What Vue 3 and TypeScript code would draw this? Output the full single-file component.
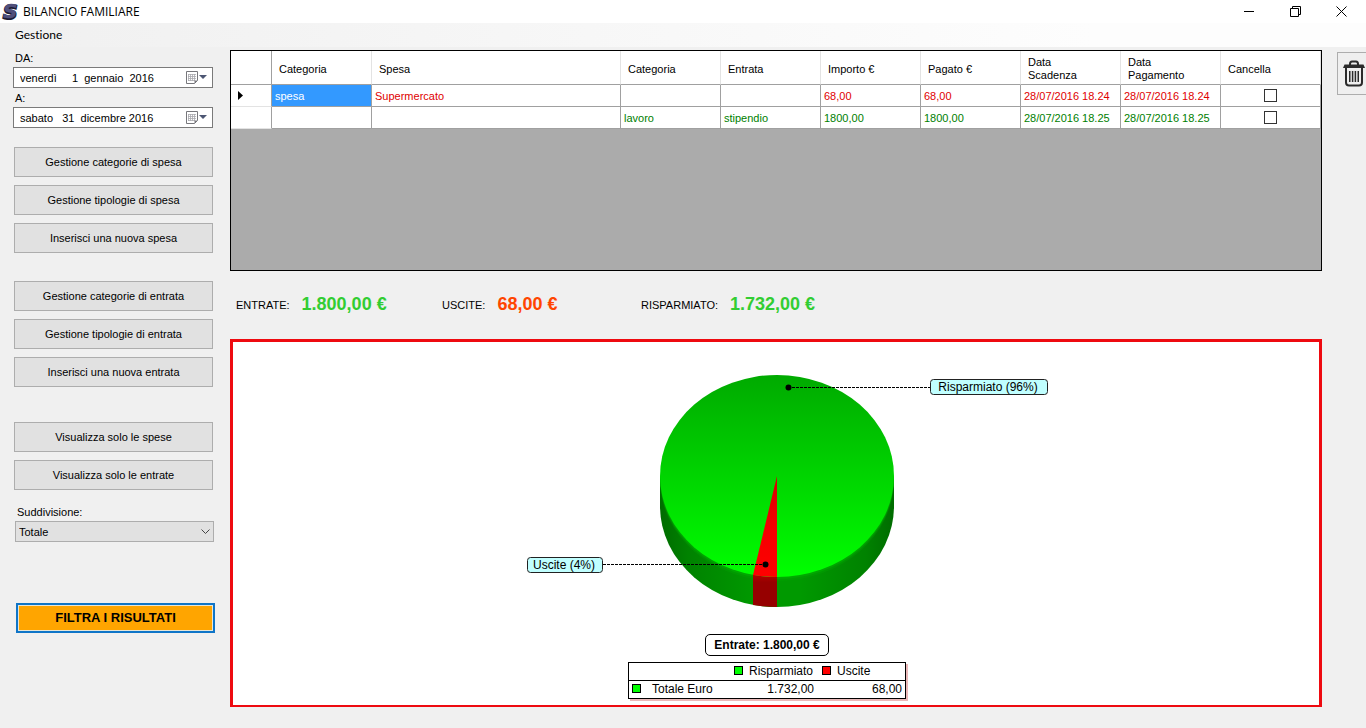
<script setup lang="ts">
import { reactive, ref } from 'vue'

interface Movement {
  expenseCategory: string
  expense: string
  incomeCategory: string
  income: string
  amount: string
  paid: string
  due: string
  paidOn: string
  kind: 'out' | 'in'
  remove: boolean
}

const movements = reactive<Movement[]>([
  {
    expenseCategory: 'spesa', expense: 'Supermercato', incomeCategory: '', income: '',
    amount: '68,00', paid: '68,00', due: '28/07/2016 18.24', paidOn: '28/07/2016 18.24',
    kind: 'out', remove: false,
  },
  {
    expenseCategory: '', expense: '', incomeCategory: 'lavoro', income: 'stipendio',
    amount: '1800,00', paid: '1800,00', due: '28/07/2016 18.25', paidOn: '28/07/2016 18.25',
    kind: 'in', remove: false,
  },
])

const headers = ['Categoria', 'Spesa', 'Categoria', 'Entrata', 'Importo €', 'Pagato €', 'Data Scadenza', 'Data Pagamento', 'Cancella']

const buttonGroups = [
  ['Gestione categorie di spesa', 'Gestione tipologie di spesa', 'Inserisci una nuova spesa'],
  ['Gestione categorie di entrata', 'Gestione tipologie di entrata', 'Inserisci una nuova entrata'],
  ['Visualizza solo le spese', 'Visualizza solo le entrate'],
]

const dates = reactive([
  { id: 'date-from', label: 'DA:', value: 'venerdì\u00a0\u00a0\u00a0\u00a0 1\u00a0 gennaio\u00a0 2016' },
  { id: 'date-to', label: 'A:', value: 'sabato\u00a0\u00a0\u00a031\u00a0 dicembre 2016' },
])

const grouping = ref('Totale')
</script>

<template>
  <div class="window">
    <header class="titlebar">
      <svg class="logo" width="18" height="20" viewBox="0 0 18 20" aria-hidden="true">
        <text x="1" y="17" class="logo-back">S</text>
        <text x="1" y="16" class="logo-front">S</text>
      </svg>
      <h1>BILANCIO FAMILIARE</h1>
      <div class="window-buttons">
        <button type="button" aria-label="Riduci a icona">
          <svg width="11" height="11" viewBox="0 0 11 11"><path d="M0 5.5H10" /></svg>
        </button>
        <button type="button" aria-label="Ripristina">
          <svg width="11" height="11" viewBox="0 0 11 11"><path d="M0.5 2.5H8.5V10.5H0.5ZM2.5 2.5V0.5H10.5V8.5H8.5" /></svg>
        </button>
        <button type="button" aria-label="Chiudi">
          <svg width="11" height="11" viewBox="0 0 11 11"><path d="M0.5 0.5L10.5 10.5M10.5 0.5L0.5 10.5" /></svg>
        </button>
      </div>
    </header>

    <nav class="menubar">
      <button type="button">Gestione</button>
    </nav>

    <div class="body">
      <aside class="sidebar">
        <div v-for="d in dates" :key="d.id" class="date-field">
          <label :for="d.id">{{ d.label }}</label>
          <div class="picker">
            <input :id="d.id" v-model="d.value" type="text" />
            <button type="button" :aria-label="'Calendario ' + d.label">
              <svg width="22" height="13" viewBox="0 0 22 13">
                <path d="M0.5 0.5H11.5V9.5L8.5 12.5H0.5Z" fill="#fff" stroke="#77777c" />
                <path d="M2.5 3V10M4.5 3V10M6.5 3V10M8.5 3V10M2 3.5H10M2 5.5H10M2 7.5H10M2 9.5H9" stroke="#a9aaae" stroke-width="0.8" />
                <path d="M8.5 12.5V9.5H11.5Z" fill="#77777c" />
                <path d="M13 4H21L17 8Z" fill="#4d5673" />
              </svg>
            </button>
          </div>
        </div>

        <div v-for="(group, g) in buttonGroups" :key="g" class="button-group">
          <button v-for="label in group" :key="label" type="button" class="btn">{{ label }}</button>
        </div>

        <div class="grouping">
          <label for="grouping">Suddivisione:</label>
          <div class="select-box">
            <select id="grouping" v-model="grouping">
              <option>Totale</option>
              <option>Mensile</option>
            </select>
            <svg width="9" height="6" viewBox="0 0 9 6" aria-hidden="true"><path d="M0.5 0.5L4.5 4.5L8.5 0.5" /></svg>
          </div>
        </div>

        <button type="button" class="filter">FILTRA I RISULTATI</button>
      </aside>

      <main class="content">
        <div class="grid">
          <table>
            <colgroup>
              <col class="col-marker" />
              <col class="col-std" />
              <col />
              <col v-for="n in 6" :key="n" class="col-std" />
              <col class="col-std" />
            </colgroup>
            <thead>
              <tr>
                <th></th>
                <th v-for="(h, i) in headers" :key="i" scope="col">{{ h }}</th>
              </tr>
            </thead>
            <tbody>
              <tr v-for="(m, i) in movements" :key="i" :class="m.kind">
                <td class="marker">
                  <svg v-if="i === 0" width="5" height="9" viewBox="0 0 5 9"><path d="M0 0L5 4.5L0 9Z" /></svg>
                </td>
                <td :class="{ selected: i === 0 }">{{ m.expenseCategory }}</td>
                <td>{{ m.expense }}</td>
                <td>{{ m.incomeCategory }}</td>
                <td>{{ m.income }}</td>
                <td>{{ m.amount }}</td>
                <td>{{ m.paid }}</td>
                <td>{{ m.due }}</td>
                <td>{{ m.paidOn }}</td>
                <td class="check"><input v-model="m.remove" type="checkbox" :aria-label="'Cancella riga ' + (i + 1)" /></td>
              </tr>
            </tbody>
          </table>
        </div>

        <dl class="totals">
          <div class="total income"><dt>ENTRATE:</dt><dd>1.800,00 €</dd></div>
          <div class="total outgo"><dt>USCITE:</dt><dd>68,00 €</dd></div>
          <div class="total saved"><dt>RISPARMIATO:</dt><dd>1.732,00 €</dd></div>
        </dl>

        <section class="chart">
          <svg class="pie" width="580" height="280" viewBox="0 0 580 280" role="img" aria-label="Risparmiato 96%, Uscite 4%">
            <defs>
              <linearGradient id="topGreen" x1="0" y1="0" x2="0" y2="1">
                <stop offset="0" stop-color="#00aa00" />
                <stop offset="1" stop-color="#00ff00" />
              </linearGradient>
              <linearGradient id="sideGreen" x1="0" y1="0" x2="1" y2="0">
                <stop offset="0" stop-color="#006c00" />
                <stop offset="0.12" stop-color="#008200" />
                <stop offset="0.4" stop-color="#009900" />
                <stop offset="0.6" stop-color="#009900" />
                <stop offset="0.88" stop-color="#008200" />
                <stop offset="1" stop-color="#006c00" />
              </linearGradient>
              <linearGradient id="topRed" x1="0" y1="0" x2="0" y2="1">
                <stop offset="0" stop-color="#d40000" />
                <stop offset="0.5" stop-color="#f40000" />
                <stop offset="1" stop-color="#ff0000" />
              </linearGradient>
              <linearGradient id="sideRed" x1="0" y1="0" x2="0" y2="1">
                <stop offset="0" stop-color="#b80000" />
                <stop offset="0.25" stop-color="#960000" />
                <stop offset="1" stop-color="#960000" />
              </linearGradient>
              <clipPath id="sideClip">
                <path d="M183 134V164A117 101 0 0 0 417 164V134Z" />
              </clipPath>
            </defs>
            <path d="M183 134V164A117 101 0 0 0 417 164V134Z" fill="url(#sideGreen)" />
            <g clip-path="url(#sideClip)">
              <ellipse cx="300" cy="138" rx="117" ry="101" fill="#00a800" fill-opacity="0.3" />
              <ellipse cx="300" cy="136" rx="117" ry="101" fill="#00b400" fill-opacity="0.5" />
            </g>
            <path d="M276 232L300 235V265Q288 265 276 263Z" fill="url(#sideRed)" />
            <ellipse cx="300" cy="134" rx="117" ry="101" fill="url(#topGreen)" />
            <path d="M300 134V235Q288 235 276 233Z" fill="url(#topRed)" />
            <g class="leaders">
              <path d="M311 45.5H453" />
              <path d="M126 222.5H289" />
              <circle cx="311.5" cy="45.5" r="3" />
              <circle cx="288.5" cy="222.5" r="3" />
            </g>
            <g class="callouts">
              <rect x="453.5" y="37.5" width="117" height="15" rx="3" />
              <text x="511" y="49">Risparmiato (96%)</text>
              <rect x="50.5" y="215.5" width="75" height="15" rx="3" />
              <text x="87" y="227">Uscite (4%)</text>
            </g>
          </svg>
          <p class="caption">Entrate: 1.800,00 €</p>
          <table class="legend">
            <thead>
              <tr>
                <td></td>
                <th scope="col"><i class="swatch green"></i>Risparmiato</th>
                <th scope="col"><i class="swatch red"></i>Uscite</th>
              </tr>
            </thead>
            <tbody>
              <tr>
                <th scope="row"><i class="swatch green"></i>Totale Euro</th>
                <td>1.732,00</td>
                <td>68,00</td>
              </tr>
            </tbody>
          </table>
        </section>
      </main>

      <div class="tools">
        <button type="button" aria-label="Cancella selezionati">
          <svg width="22" height="27" viewBox="0 0 22 27">
            <path d="M7 5V4Q7 1.5 9 1.5H13Q15 1.5 15 4V5" fill="none" stroke="#2b2b2b" stroke-width="2" />
            <path d="M1.5 4.5H20.5L22 8H0Z" fill="#2b2b2b" />
            <path d="M3 8V22.5Q3 25.5 6 25.5H16Q19 25.5 19 22.5V8" fill="none" stroke="#2b2b2b" stroke-width="2" />
            <path d="M6.75 11V22M9.6 11V22M12.4 11V22M15.25 11V22" stroke="#2b2b2b" stroke-width="1.5" />
          </svg>
        </button>
      </div>
    </div>
  </div>
</template>

<style>
body {
  background: #f0f0f0;
}
</style>

<style scoped>
* {
  box-sizing: border-box;
}
.window {
  min-height: 100vh;
  display: flex;
  flex-direction: column;
  overflow: hidden;
  background: #f0f0f0;
  color: #000;
  font: 11px/14px "Liberation Sans", Arial, sans-serif;
}
button,
input,
select {
  font: inherit;
  color: inherit;
  margin: 0;
}
.titlebar {
  display: flex;
  align-items: center;
  height: 23px;
  background: #fff;
  padding-left: 2px;
}
.logo {
  overflow: visible;
}
.logo text {
  font: italic bold 20px "DejaVu Sans", sans-serif;
}
.logo-back {
  fill: #1c1c34;
  stroke: #1c1c34;
  stroke-width: 2;
}
.logo-front {
  fill: #50507c;
  stroke: #50507c;
  stroke-width: 0.5;
}
.titlebar h1 {
  flex: 1;
  margin: 0 0 0 3px;
  font: 12px/22px "Open Sans", "Noto Sans", sans-serif;
}
.window-buttons {
  display: flex;
  margin-right: 2px;
}
.window-buttons button {
  width: 46px;
  height: 22px;
  padding: 0;
  border: 0;
  background: none;
  display: grid;
  place-items: center;
}
.window-buttons path {
  fill: none;
  stroke: #000;
}
.menubar {
  height: 24px;
  padding-left: 15px;
  background: linear-gradient(90deg, #f0f0f0, #fdfdfd 80%);
}
.menubar button {
  padding: 0;
  border: 0;
  background: none;
  font: 12px/24px Lato, "Open Sans", sans-serif;
  font-variant-ligatures: none;
}
.body {
  flex: 1;
  display: flex;
}
.sidebar {
  width: 230px;
  flex: none;
  padding: 4px 17px 0 14px;
}
.date-field {
  margin-left: -1px;
}
.date-field label {
  display: block;
  padding-left: 2px;
  margin-bottom: 2px;
}
.date-field + .date-field {
  margin-top: 3px;
}
.picker {
  display: flex;
  height: 21px;
  border: 1px solid #7a7a7a;
  background: #fff;
}
.picker input {
  flex: 1;
  min-width: 0;
  border: 0;
  padding: 0 0 0 6px;
  background: none;
}
.picker button {
  border: 0;
  padding: 0 4px 0 0;
  background: none;
  display: flex;
  align-items: center;
}
.button-group {
  display: flex;
  flex-direction: column;
  gap: 8px;
  margin-top: 28px;
}
.date-field + .button-group {
  margin-top: 19px;
}
.button-group:nth-of-type(5) {
  margin-top: 35px;
}
.btn {
  height: 30px;
  padding: 0;
  border: 1px solid #adadad;
  background: #e1e1e1;
}
.grouping {
  margin: 15px -1px 0 1px;
}
.grouping label {
  display: block;
  padding-left: 2px;
  margin-bottom: 2px;
}
.select-box {
  position: relative;
}
.select-box select {
  display: block;
  width: 100%;
  height: 21px;
  padding: 0 3px;
  border: 1px solid #adadad;
  border-radius: 0;
  appearance: none;
  background: #e1e1e1;
}
.select-box svg {
  position: absolute;
  right: 4px;
  top: 8px;
  pointer-events: none;
}
.select-box path {
  fill: none;
  stroke: #444;
}
.filter {
  display: block;
  width: 100%;
  height: 30px;
  margin: 61px 0 0 2px;
  padding: 0;
  border: 2px solid #0f75c8;
  background: #ffa500;
  box-shadow: inset 0 0 0 1px #e6e6d8;
  font: bold 13px/24px "Liberation Sans", Arial, sans-serif;
}
.content {
  flex: 1;
  min-width: 0;
  display: flex;
  flex-direction: column;
  padding: 3px 0 21px;
}
.grid {
  height: 221px;
  border: 1px solid #000;
  background: #ababab;
}
.grid table {
  width: 100%;
  table-layout: fixed;
  border-collapse: separate;
  border-spacing: 0;
  background: #fff;
}
.col-marker {
  width: 41px;
}
.col-std {
  width: 100px;
}
.grid th {
  height: 34px;
  padding: 3px 38px 0 7px;
  border-right: 1px solid #e3e3e3;
  border-bottom: 1px solid #a0a0a0;
  font-weight: normal;
  line-height: 13px;
  text-align: left;
  white-space: nowrap;
}
.grid th:nth-child(8),
.grid th:nth-child(9) {
  white-space: normal;
}
.grid th:first-child {
  border-right-color: #a0a0a0;
}
.grid td {
  height: 22px;
  padding: 0 0 0 3px;
  border-right: 1px solid #a0a0a0;
  border-bottom: 1px solid #a0a0a0;
  white-space: nowrap;
}
.grid .marker {
  padding-left: 7px;
  border-bottom-color: #e3e3e3;
}
.marker svg {
  display: block;
}
.out {
  color: #e00000;
}
.in {
  color: #008000;
}
.grid .selected {
  background: #3399ff;
  color: #fff;
}
.grid .check {
  padding: 0;
}
.check input {
  appearance: none;
  display: block;
  width: 13px;
  height: 13px;
  margin: 0 auto;
  border: 1px solid #333;
  background: #fff;
}
.check input:checked {
  background: #333;
}
.totals {
  display: flex;
  align-items: center;
  height: 68px;
  margin: 0;
  padding: 0 0 2px 6px;
}
.total {
  display: flex;
  align-items: center;
  gap: 12px;
}
.total.income {
  width: 206px;
}
.total.outgo {
  width: 199px;
}
.total dt {
  padding-top: 2px;
}
.total dd {
  margin: 0;
  font-size: 18px;
  line-height: 22px;
  font-weight: bold;
  color: #32cd32;
}
.total.outgo dd {
  color: #ff4500;
}
.chart {
  flex: 1;
  display: flex;
  flex-direction: column;
  align-items: center;
  padding-right: 18px;
  border: 3px solid #ee0a10;
  border-bottom-width: 2px;
  background: #fff;
}
.pie {
  flex: none;
}
.leaders path {
  stroke: #000;
  stroke-dasharray: 3 1;
}
.callouts rect {
  fill: #c0ffff;
  stroke: #222;
}
.callouts text {
  font-size: 12px;
  text-anchor: middle;
  fill: #000;
}
.caption {
  margin: 12px 0 6px;
  padding: 0 8px;
  border: 1px solid #000;
  border-radius: 5px;
  font-size: 12px;
  line-height: 20px;
  font-weight: bold;
}
.legend {
  width: 278px;
  table-layout: fixed;
  border: 1px solid #000;
  border-collapse: separate;
  border-spacing: 0;
  box-shadow: 2px 2px 0 #eab8b8;
  font-size: 12px;
  line-height: 17px;
}
.legend th,
.legend td {
  padding: 0 3px;
  font-weight: normal;
  text-align: left;
}
.legend thead th,
.legend thead td {
  border-bottom: 1px solid #000;
}
.legend thead th {
  width: 88px;
  padding: 0 0 0 5px;
}
.legend tbody td {
  text-align: right;
}
.swatch {
  display: inline-block;
  width: 9px;
  height: 9px;
  margin-right: 6px;
  border: 1px solid #000;
}
.legend tbody .swatch {
  margin-right: 11px;
}
.green {
  background: #00ff00;
}
.red {
  background: #ff0000;
}
.tools {
  width: 44px;
  flex: none;
  padding: 5px 0 0 15px;
}
.tools button {
  width: 45px;
  height: 43px;
  padding: 0 0 0 5px;
  border: 1px solid #adadad;
  background: #efefef;
  display: flex;
  align-items: center;
}
</style>
